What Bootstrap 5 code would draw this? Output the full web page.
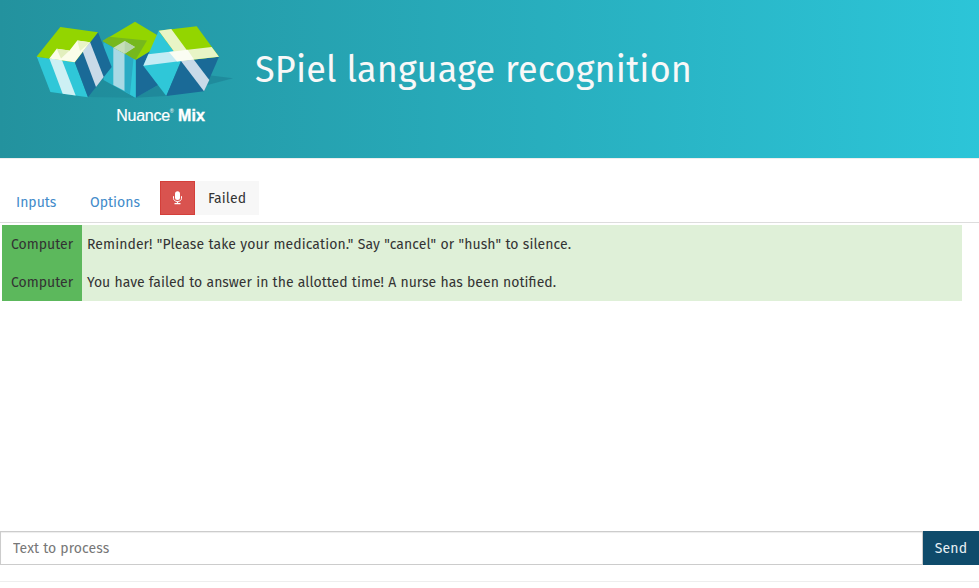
<!DOCTYPE html>
<html lang="en">
<head>
  <meta charset="UTF-8" />
  <meta name="viewport" content="width=device-width, initial-scale=1.0" />
  <title>SPiel language recognition</title>
  <link href="https://cdn.jsdelivr.net/npm/bootstrap@5.3.0/dist/css/bootstrap.min.css" rel="stylesheet" />
  <style>
    body {
      font-family: "Fira Sans", "Noto Sans", sans-serif;
      font-size: 14px;
      line-height: 20px;
      font-feature-settings: "liga" 1;
      color: #333;
    }
    .page-top {
      height: 159px;
      padding: 15px 0 0 30px;
      background: linear-gradient(90deg, #23929e, #2cc5d8);
      background-clip: padding-box;
      border-bottom: 1px solid #eee;
    }
    .page-top h1 {
      margin: 33px 0 0 15px;
      font-size: 36px;
      line-height: 44px;
      font-weight: 400;
      color: #f8f8f8;
      letter-spacing: 0.18px;
    }
    .toolbar {
      height: 64px;
      padding-bottom: 7px;
      border-bottom: 1px solid #ddd;
    }
    .toolbar .nav-link {
      padding: 0;
      white-space: nowrap;
      color: #428bca;
    }
    .nav-inputs { margin: 0 34px 2px 16px; width: 40px; }
    .nav-options { margin: 0 20px 2px 0; width: 50px; }
    .btn-mic {
      width: 35px;
      height: 34px;
      padding: 0;
      border: 1px solid #d43f3a;
      border-radius: 0;
      background: #d9534f;
    }
    .status {
      width: 64px;
      height: 34px;
      padding-top: 2px;
      letter-spacing: 0.1px;
      background: #f7f7f7;
    }
    .log {
      height: 308px;
      padding: 2px 17px 0 2px;
    }
    .log-row { height: 38px; background: #dff0d8; }
    .who {
      width: 80px;
      padding: 2px 0 0 9px;
      background: #5cb85c;
    }
    .said {
      padding: 2px 0 0 5px;
      letter-spacing: 0.02px;
      word-spacing: 0.5px;
    }
    .said-quoted { letter-spacing: 0.08px; }
    .send-bar .form-control {
      height: 34px;
      padding: 6px 12px;
      font-size: 14px;
      line-height: 20px;
      letter-spacing: 0.12px;
      border: 1px solid #ccc;
      border-radius: 0;
      box-shadow: inset 0 1px 1px rgba(0, 0, 0, .075);
    }
    .send-bar .form-control::placeholder { color: #777; }
    .btn-send {
      width: 56px;
      height: 34px;
      padding: 0;
      font-size: 14px;
      letter-spacing: 0.12px;
      border: 0;
      border-radius: 0;
      color: #e8f0f4;
      background: #0f4b6b;
    }
    .page-end {
      margin: 16px 0 0;
      border-top: 1px solid #eee;
    }
    .logo text {
      font-family: "Liberation Sans", Arial, sans-serif;
    }
  </style>
</head>
<body class="overflow-hidden">
  <!-- Header -->
  <header class="page-top d-flex align-items-start">
    <svg class="logo flex-shrink-0" width="210" height="115" viewBox="30 15 210 115">
      <!-- shadows -->
      <path d="M88 97L112 66L136 97.7Z" fill="#1c7f92" opacity=".4"/>
      <path d="M211 75.5L233 78.3L166 96L135 97.7L168 80Z" fill="#1c7f92" opacity=".6"/>
      <!-- middle cube -->
      <path d="M103.5 42L135.5 59.7V97.7L103.5 80Z" fill="#2bb6ca"/>
      <path d="M135.5 59.7L167 41V80L135.5 97.7Z" fill="#1a6a97"/>
      <path d="M102.7 41L135 21.7L167 41L135.5 60Z" fill="#93d500"/>
      <path d="M102.7 41L109 36.8L147 40.5L135.5 60Z" fill="#76b81d"/>
      <path d="M113.3 47.7L124.7 53.7V91L113.3 85Z" fill="#a9d9e5"/>
      <path d="M113.3 47.7L124.7 41L135 47L124.7 53.7Z" fill="#c6dfb9"/>
      <path d="M124.7 41L135 47L124.7 53.7Z" fill="#b5d5ab"/>
      <path d="M124.7 53.7L135.5 60V97.7L124.7 91Z" fill="#2aabc4"/>
      <path d="M133.5 58.8L135.7 60V97.7L130 94.5Z" fill="#2fc7d8"/>
      <!-- left cube -->
      <path d="M36.8 56.7L74.7 62L88 97.3L50.4 92Z" fill="#2fc7d8"/>
      <path d="M98 32.3L111.7 67L88 97.3L74.7 62Z" fill="#1a6a97"/>
      <path d="M36.5 56.7L60.3 27L98 32.3L74.7 62.3Z" fill="#93d500"/>
      <path d="M49.3 58.3L62 60.3L75.7 95.6L62.7 93.7Z" fill="#cdf0f4"/>
      <path d="M82.7 51.5L90 42L103.7 77L96 87Z" fill="#c9dae8"/>
      <path d="M49.3 58.5L56.7 48.7L69.5 50.5L77.3 40.5L90 42.3L74.7 62.2Z" fill="#fbfde9"/>
      <path d="M56.7 48.7L69.5 50.5L61 58.5Z" fill="#e2efbd"/>
      <path d="M77.3 40.5L90 42.3L80 51Z" fill="#e9f4c8"/>
      <!-- right cube -->
      <path d="M158.7 30.7L181 61L166.3 96L143.3 65.7Z" fill="#2fc7d8"/>
      <path d="M181 61L219 56.7L204 91.3L166.3 96Z" fill="#1a6a97"/>
      <path d="M158.7 30.7L196.7 26.3L219 56.7L181 61Z" fill="#93d500"/>
      <path d="M158.7 30.7L171.3 29L193.7 59.5L181 61Z" fill="#e8f5c6"/>
      <path d="M172.5 51.5L211.7 47L219 56.7L181 61Z" fill="#e8f5c6"/>
      <path d="M148.3 54.3L174 51.3L181 61L143.3 65.7Z" fill="#c5ecf4"/>
      <path d="M181 61L193.7 59.5L209.3 80L204 91.3Z" fill="#c9dae8"/>
      <path d="M169 52L187.5 49.8L194 59.5L177 61.5Z" fill="#fbfdf3"/>
      <text x="116.2" y="121" font-size="16" fill="#fff" stroke="#fff" stroke-width=".2" textLength="54" lengthAdjust="spacing">Nuance</text>
      <text x="169.7" y="113" font-size="5.5" fill="#fff">®</text>
      <text x="178" y="121" font-size="16" font-weight="700" fill="#fff" stroke="#fff" stroke-width=".4" textLength="27" lengthAdjust="spacing">Mix</text>
    </svg>
    <h1>SPiel language recognition</h1>
  </header>

  <!-- Tabs and microphone -->
  <nav class="toolbar d-flex align-items-end">
    <a class="nav-link nav-inputs" href="#">Inputs</a>
    <a class="nav-link nav-options" href="#">Options</a>
    <button class="btn btn-mic d-flex align-items-center justify-content-center" type="button" aria-label="Microphone">
      <svg width="9" height="14" viewBox="0 0 9 14" fill="none" stroke="#fff">
        <rect x="2" y="0.3" width="5" height="8.7" rx="2.5" fill="#fff" stroke="none"/>
        <path d="M.5 5.2V7.3C.5 9.3 2.2 10.5 4.5 10.5S8.5 9.3 8.5 7.3V5.2" stroke-width="1"/>
        <path d="M4.5 10.5V12.6M1.5 12.7H7.5" stroke-width="1.2"/>
      </svg>
    </button>
    <div class="status d-flex align-items-center justify-content-center">Failed</div>
  </nav>

  <!-- Conversation -->
  <main class="log">
    <div class="log-row d-flex">
      <div class="who d-flex align-items-center">Computer</div>
      <div class="said said-quoted d-flex align-items-center">Reminder! "Please take your medication." Say "cancel" or "hush" to silence.</div>
    </div>
    <div class="log-row d-flex">
      <div class="who d-flex align-items-center">Computer</div>
      <div class="said d-flex align-items-center">You have failed to answer in the allotted time! A nurse has been notified.</div>
    </div>
  </main>

  <!-- Text input -->
  <form class="send-bar d-flex">
    <input type="text" class="form-control flex-grow-1" placeholder="Text to process">
    <button class="btn btn-send flex-shrink-0" type="button">Send</button>
  </form>
  <div class="page-end"></div>

  <script src="https://cdn.jsdelivr.net/npm/bootstrap@5.3.0/dist/js/bootstrap.bundle.min.js"></script>
</body>
</html>
